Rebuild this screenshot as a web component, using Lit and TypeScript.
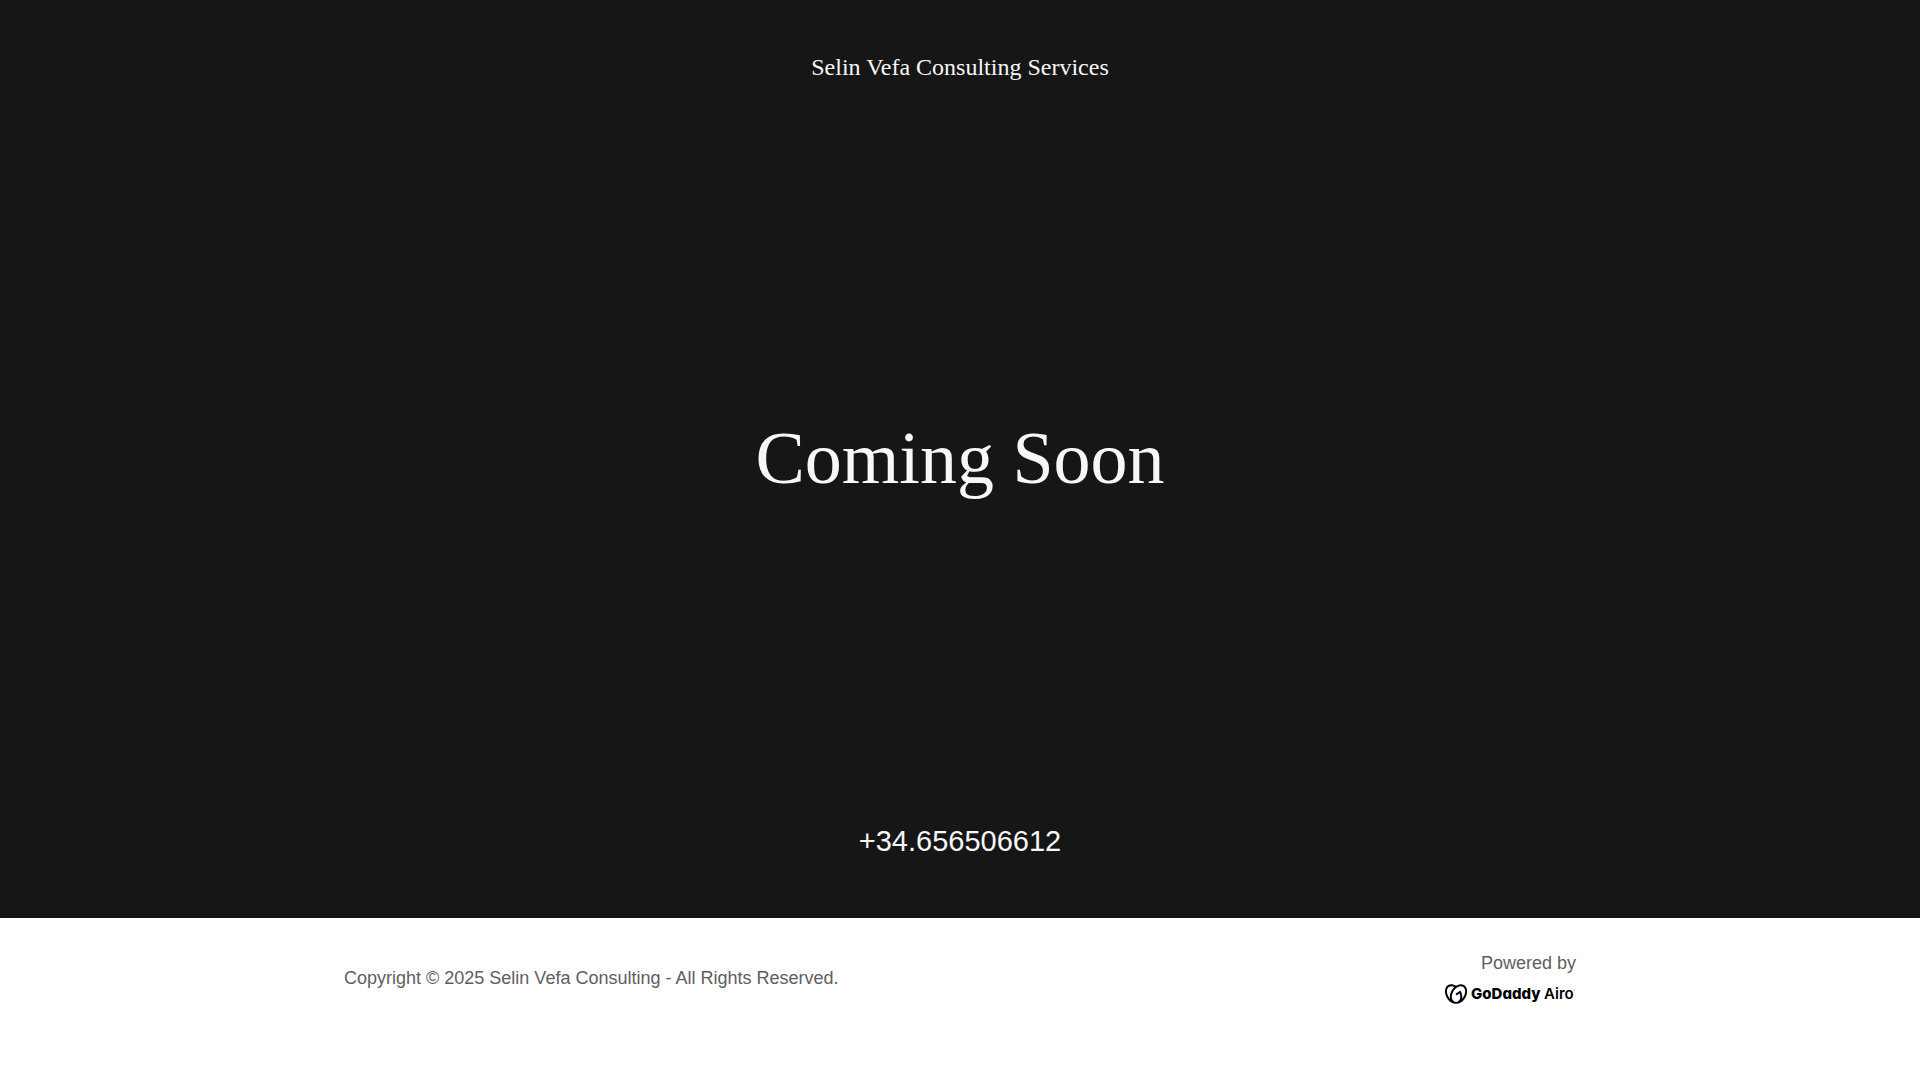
import { LitElement, css, html } from "lit";
import { customElement } from "lit/decorators.js";

@customElement("airo-logo")
class AiroLogo extends LitElement {
  static styles = css`
    :host {
      display: block;
    }
    .logo {
      display: block;
      width: 132px;
      height: 24px;
      fill: #000;
    }
    .brand,
    .product {
      font-family: Inter, "Open Sans", sans-serif;
      font-feature-settings: "cv11";
      font-size: 15px;
    }
    .brand {
      font-weight: 800;
    }
    .product {
      font-weight: 600;
    }
    .trademark {
      fill: #b5b5b5;
    }
  `;

  render() {
    return html`
      <svg class="logo" viewBox="0 0 132 24" role="img" aria-label="GoDaddy Airo">
        <g transform="translate(1 1) scale(0.92)">
          <path
            d="M20.702 2.29c-2.494-1.554-5.778-1.187-8.706.654C9.076 1.104 5.79.736 3.3 2.29c-3.941 2.463-4.42 8.806-1.07 14.167 2.47 3.954 6.333 6.269 9.77 6.226 3.439.043 7.301-2.273 9.771-6.226 3.347-5.361 2.872-11.704-1.069-14.167zM4.042 15.328a12.838 12.838 0 01-1.546-3.541 10.12 10.12 0 01-.336-3.338c.15-1.98.956-3.524 2.27-4.345 1.315-.822 3.052-.87 4.903-.137.281.113.556.24.825.382A15.11 15.11 0 007.5 7.54c-2.035 3.255-2.655 6.878-1.945 9.765a13.247 13.247 0 01-1.514-1.98zm17.465-3.541a12.866 12.866 0 01-1.547 3.54 13.25 13.25 0 01-1.513 1.984c.635-2.589.203-5.76-1.353-8.734a.39.39 0 00-.563-.153l-4.852 3.032a.397.397 0 00-.126.546l.712 1.139a.395.395 0 00.547.126l3.145-1.965c.101.306.203.606.28.916.296 1.086.41 2.214.335 3.337-.15 1.982-.956 3.525-2.27 4.347a4.437 4.437 0 01-2.25.65h-.101a4.432 4.432 0 01-2.25-.65c-1.314-.822-2.121-2.365-2.27-4.347-.074-1.123.039-2.251.335-3.337a13.212 13.212 0 014.05-6.482 10.148 10.148 0 012.849-1.765c1.845-.733 3.586-.685 4.9.137 1.316.822 2.122 2.365 2.271 4.345a10.146 10.146 0 01-.33 3.334z"
          />
        </g>
        <text class="brand" x="27" y="17">GoDaddy</text>
        <text class="product" x="100" y="17">Airo</text>
        <circle class="trademark" cx="130.5" cy="8.5" r="0.6" />
      </svg>
    `;
  }
}

@customElement("app-root")
class AppRoot extends LitElement {
  static styles = css`
    :host {
      display: block;
      min-height: 100vh;
      background: #fff;
      font-family: "Liberation Sans", Arial, sans-serif;
    }
    .hero {
      box-sizing: border-box;
      min-height: 85vh;
      padding: 49px 24px 55px;
      display: flex;
      flex-direction: column;
      align-items: center;
      justify-content: space-between;
      background: #161616;
      color: #f7f7f7;
      text-align: center;
    }
    .name,
    .headline {
      margin: 0;
      font-family: "Liberation Serif", "Times New Roman", serif;
      font-weight: 400;
    }
    .name {
      padding-bottom: 12px;
      font-size: 24px;
      line-height: 36px;
    }
    .headline {
      font-size: 74px;
      line-height: 92px;
    }
    .phone {
      font-size: 29px;
      line-height: 44px;
      color: inherit;
      text-decoration: none;
    }
    .footer {
      box-sizing: border-box;
      max-width: 1280px;
      margin: 0 auto;
      padding: 32px 24px;
      display: flex;
      align-items: center;
      justify-content: space-between;
      gap: 24px;
      color: #5e5e5e;
      font-size: 18px;
      line-height: 27px;
    }
    .copyright {
      margin: 0;
    }
    .powered {
      display: flex;
      flex-direction: column;
      align-items: flex-end;
      gap: 5px;
      color: inherit;
      text-decoration: none;
    }
  `;

  render() {
    return html`
      <main class="hero">
        <p class="name">Selin Vefa Consulting Services</p>
        <h1 class="headline">Coming Soon</h1>
        <a class="phone" href="tel:+34.656506612">+34.656506612</a>
      </main>
      <footer class="footer">
        <p class="copyright">Copyright © 2025 Selin Vefa Consulting - All Rights Reserved.</p>
        <a class="powered" href="#airo">
          <span>Powered by</span>
          <airo-logo></airo-logo>
        </a>
      </footer>
    `;
  }
}
